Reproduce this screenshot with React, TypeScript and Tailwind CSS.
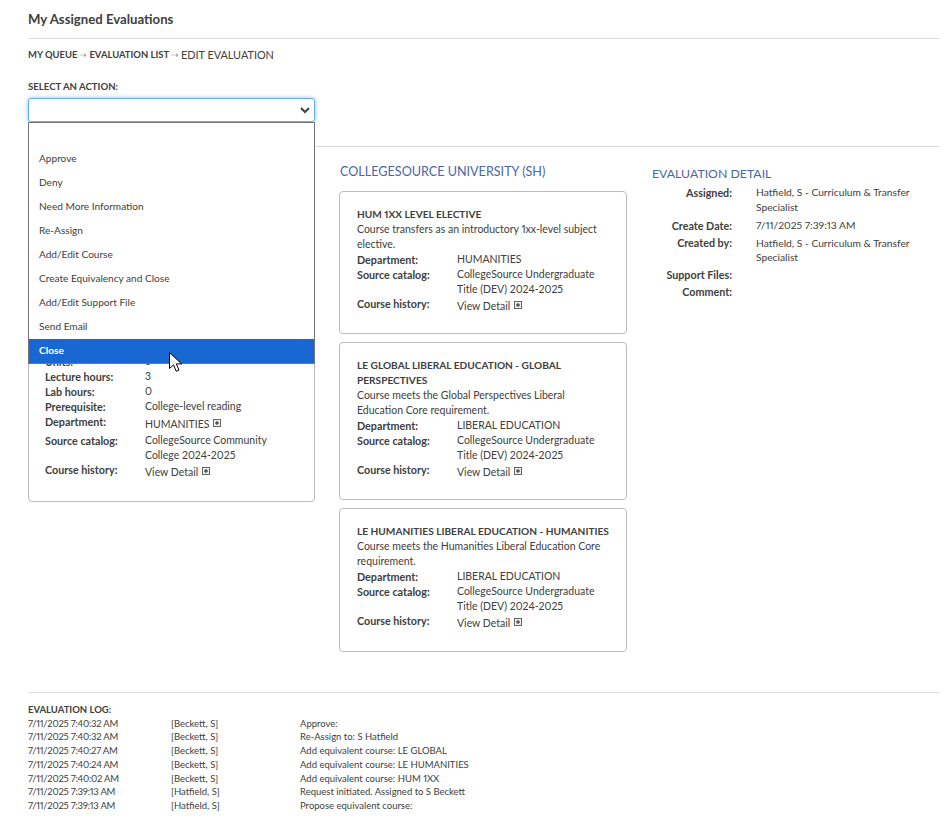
const actions = ['Approve', 'Deny', 'Need More Information', 'Re-Assign', 'Add/Edit Course', 'Create Equivalency and Close', 'Add/Edit Support File', 'Send Email', 'Close']

const logRows = [
  ['7/11/2025 7:40:32 AM', '[Beckett, S]', 'Approve:'],
  ['7/11/2025 7:40:32 AM', '[Beckett, S]', 'Re-Assign to: S Hatfield'],
  ['7/11/2025 7:40:27 AM', '[Beckett, S]', 'Add equivalent course: LE GLOBAL'],
  ['7/11/2025 7:40:24 AM', '[Beckett, S]', 'Add equivalent course: LE HUMANITIES'],
  ['7/11/2025 7:40:02 AM', '[Beckett, S]', 'Add equivalent course: HUM 1XX'],
  ['7/11/2025 7:39:13 AM', '[Hatfield, S]', 'Request initiated. Assigned to S Beckett'],
  ['7/11/2025 7:39:13 AM', '[Hatfield, S]', 'Propose equivalent course:'],
]

function PlusBox() {
  return (
    <svg width="8" height="8" viewBox="0 0 8 8" className="inline-block ml-[4px] align-[1px]">
      <rect x="0.5" y="0.5" width="7" height="7" fill="#eee" stroke="#666" />
      <path d="M2 4h4M4 2v4" stroke="#222" />
    </svg>
  )
}

function Row({ label, children, className = '' }: { label: string; children: React.ReactNode; className?: string }) {
  return (
    <div className={`flex ${className}`}>
      <div className="w-[100px] shrink-0 font-bold text-[10.75px]">{label}</div>
      <div className="flex-1">{children}</div>
    </div>
  )
}

function Card({ title, desc, dept, catalog, className }: { title: string; desc: string; dept: string; catalog: string; className: string }) {
  return (
    <div className={`border border-[#bbb] rounded-[4px] pl-[17px] pr-[14px] pt-[15px] ${className}`}>
      <div className="font-bold text-[10.15px]">{title}</div>
      <div>{desc}</div>
      <Row label="Department:">{dept}</Row>
      <Row label="Source catalog:">{catalog}</Row>
      <Row label="Course history:" className="-mt-[1px]">
        <span className="block mt-[3px]">View Detail<PlusBox /></span>
      </Row>
    </div>
  )
}

function DetailRow({ label, children, className = '' }: { label: string; children?: React.ReactNode; className?: string }) {
  return (
    <div className={`flex ${className}`}>
      <div className="w-[80px] shrink-0 text-right font-bold text-[10.75px]">{label}</div>
      <div className="ml-[24px] w-[185px] text-[10.25px]">{children}</div>
    </div>
  )
}

export default function App() {
  return (
    <div className="relative w-[951px] h-[824px] overflow-hidden bg-white text-[#404040] font-['Lato','Liberation_Sans',sans-serif] proportional-nums text-[10.5px] leading-[15px]">
      <div className="w-[940px] pl-[28px]">
        <h1 className="pt-[11px] h-[39px] border-b border-[#ddd] text-[13.2px] leading-[16px] font-bold">My Assigned Evaluations</h1>
        <div className="mt-[8px] h-[14px] flex items-center text-[9.45px] font-bold">
          MY QUEUE
          <span className="mx-[2px] font-normal text-[#999]">⇢</span>
          EVALUATION LIST
          <span className="mx-[2px] font-normal text-[#999]">⇢</span>
          <span className="text-[10.85px] font-normal">EDIT EVALUATION</span>
        </div>
        <div className="mt-[20px] h-[12px] text-[9.6px] leading-[12px] font-bold">SELECT AN ACTION:</div>

        <div className="relative mt-[5px] w-[287px] h-[24px] z-10">
          <div className="h-[24px] rounded-[3px] border border-[#66afe9] shadow-[0_0_4px_rgba(102,175,233,0.8)] bg-white flex items-center justify-end pr-[3px]">
            <svg width="12" height="12" viewBox="0 0 12 12" fill="none" stroke="#444" strokeWidth="2">
              <path d="M2 4l4 4 4-4" />
            </svg>
          </div>
          <div className="absolute left-0 top-[24px] w-[287px] h-[242px] border border-[#767676] bg-white pt-[24px] text-[10.1px]">
            {actions.map((a) => (
              <div key={a} className={`h-[24px] pl-[10px] pb-[2px] flex items-center ${a === 'Close' ? 'bg-[#1967d2] text-white font-bold' : ''}`}>{a}</div>
            ))}
          </div>
        </div>

        <div className="mt-[24px] ml-[287px] border-t border-[#ddd]" />

        <div className="flex mt-[15px]">
          <div className="w-[287px] shrink-0 pt-[29px]">
            <div className="h-[311px] border border-[#bbb] rounded-[4px] pl-[16px] pr-[30px] pt-[162px]">
              <Row label="Units:">3</Row>
              <Row label="Lecture hours:">3</Row>
              <Row label="Lab hours:">0</Row>
              <Row label="Prerequisite:">College-level reading</Row>
              <Row label="Department:" className="mb-[1px]"><span className="block mt-[3px]">HUMANITIES<PlusBox /></span></Row>
              <Row label="Source catalog:">CollegeSource Community College 2024-2025</Row>
              <Row label="Course history:" className="-mt-[1px]"><span className="block mt-[3px]">View Detail<PlusBox /></span></Row>
            </div>
          </div>

          <div className="ml-[24px] w-[288px] shrink-0">
            <h2 className="h-[19px] ml-[1px] text-[12.6px] leading-[19px] text-[#4a66ac]">COLLEGESOURCE UNIVERSITY (SH)</h2>
            <div className="mt-[10px] flex flex-col gap-[8px]">
              <Card className="h-[143px]" title="HUM 1XX LEVEL ELECTIVE" desc="Course transfers as an introductory 1xx-level subject elective." dept="HUMANITIES" catalog="CollegeSource Undergraduate Title (DEV) 2024-2025" />
              <Card className="h-[158px]" title="LE GLOBAL LIBERAL EDUCATION - GLOBAL PERSPECTIVES" desc="Course meets the Global Perspectives Liberal Education Core requirement." dept="LIBERAL EDUCATION" catalog="CollegeSource Undergraduate Title (DEV) 2024-2025" />
              <Card className="h-[144px]" title="LE HUMANITIES LIBERAL EDUCATION - HUMANITIES" desc="Course meets the Humanities Liberal Education Core requirement." dept="LIBERAL EDUCATION" catalog="CollegeSource Undergraduate Title (DEV) 2024-2025" />
            </div>
          </div>

          <div className="ml-[25px] flex-1">
            <h2 className="h-[19px] mt-[2px] text-[12.3px] leading-[19px] text-[#4a66ac]">EVALUATION DETAIL</h2>
            <DetailRow label="Assigned:" className="mt-[2px]">Hatfield, S - Curriculum &amp; Transfer Specialist</DetailRow>
            <DetailRow label="Create Date:" className="mt-[3px]">7/11/2025 7:39:13 AM</DetailRow>
            <DetailRow label="Created by:" className="mt-[3px] leading-[14px]">Hatfield, S - Curriculum &amp; Transfer Specialist</DetailRow>
            <DetailRow label="Support Files:" className="mt-[3px]" />
            <DetailRow label="Comment:" className="mt-[2px] h-[15px]" />
          </div>
        </div>

        <div className="mt-[40px] border-t border-[#ddd] pt-[10px] text-[9.5px] leading-[13.7px]">
          <div className="font-bold">EVALUATION LOG:</div>
          {logRows.map((r, i) => (
            <div key={i} className="flex">
              <div className="w-[143px] tracking-[-0.25px]">{r[0]}</div>
              <div className="w-[129px]">{r[1]}</div>
              <div>{r[2]}</div>
            </div>
          ))}
        </div>
      </div>

      {/* mouse cursor over the open list */}
      <svg width="14" height="21" viewBox="0 0 14 21" className="absolute left-[169px] top-[352px] z-20">
        <path d="M0.5 0.5v16l4-3.6 2.7 6.4 2.8-1.2-2.7-6.2h5.4z" fill="#fff" stroke="#000" strokeWidth="1" />
      </svg>
    </div>
  )
}
